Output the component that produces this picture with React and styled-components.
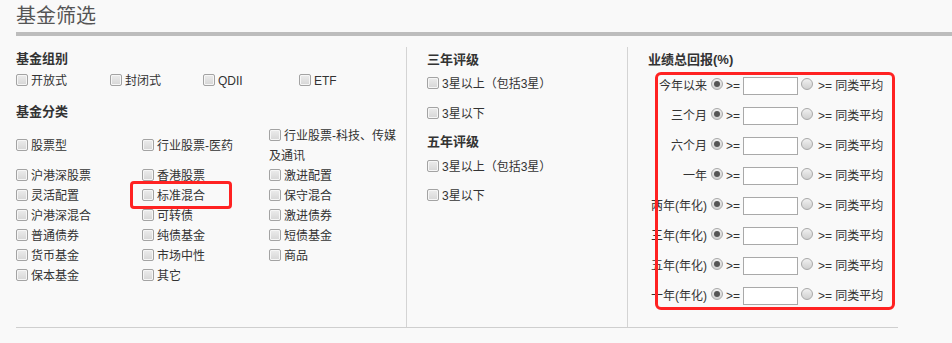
import React from "react"
import styled, { createGlobalStyle } from "styled-components"

const GlobalStyle = createGlobalStyle`
	body {
		margin: 0;
		background: #f9f9f9;
		font-family: "Liberation Sans", "Noto Sans CJK SC", sans-serif;
		font-size: 12px;
		color: #333;
	}
`

const Page = styled.div`
	padding-left: 16px;
`

const Title = styled.h2`
	margin: 3px 0 0;
	font-size: 20px;
	font-weight: normal;
	line-height: 27px;
	color: #555;
`

const TitleBar = styled.div`
	margin-top: 2px;
	height: 4px;
	background: #bdbdbd;
`

const Panel = styled.div`
	display: flex;
	width: 882px;
	height: 280px;
	margin-top: 11px;
	border-bottom: 1px solid #cfcfcf;
`

const Column = styled.div`
	width: ${props => props.width}px;
	box-sizing: border-box;
	padding-left: ${props => (props.divider ? 20 : 0)}px;
	border-left: ${props => (props.divider ? "1px solid #d4d4d4" : "none")};
`

const Heading = styled.h4`
	margin: ${props => props.top || 0}px 0 0;
	font-size: 13px;
	font-weight: bold;
	line-height: 18px;
	color: #333;
`

const GroupRow = styled.div`
	display: grid;
	grid-template-columns: 94px 93px 96px auto;
	margin-top: 3px;
`

const ClassGrid = styled.div`
	display: grid;
	grid-template-columns: 126px 127px 131px;
	align-items: center;
	margin-top: 5px;
`

const CheckItem = styled.div`
	line-height: 20px;
	margin-top: ${props => props.top || 0}px;
`

const Box = styled.span`
	display: inline-block;
	box-sizing: border-box;
	width: 12px;
	height: 12px;
	margin-right: 3px;
	vertical-align: -1px;
	border: 1px solid #a3a3a3;
	border-radius: 2px;
	background: linear-gradient(#ececec, #d6d6d6);
	box-shadow: inset 0 0 0 1px #f6f6f6;
`

const PerfList = styled.div`
	position: relative;
	margin-top: 2px;
`

const PerfRow = styled.div`
	display: flex;
	align-items: center;
	height: 30px;
`

const PerfLabel = styled.span`
	width: 59px;
	text-align: right;
	line-height: 20px;
`

const Radio = styled.span`
	position: relative;
	box-sizing: border-box;
	width: 12px;
	height: 12px;
	margin: -5px 0 0 ${props => props.gap}px;
	border: 1px solid #a8a8a8;
	border-radius: 50%;
	background: linear-gradient(#f0f0f0, #cfcfcf);
	&::after {
		content: "";
		display: ${props => (props.checked ? "block" : "none")};
		position: absolute;
		left: 2px;
		top: 2px;
		width: 6px;
		height: 6px;
		border-radius: 50%;
		background: #555;
	}
`

const Op = styled.span`
	margin-left: ${props => props.gap}px;
	line-height: 20px;
`

const NumInput = styled.input`
	box-sizing: border-box;
	width: 55px;
	height: 18px;
	margin: 0 0 0 3px;
	padding: 0 2px;
	border: 1px solid #a9a9a9;
	background: #fff;
	font-size: 12px;
	outline: none;
`

const Highlight = styled.div`
	position: absolute;
	left: ${props => props.left}px;
	top: ${props => props.top}px;
	width: ${props => props.width}px;
	height: ${props => props.height}px;
	box-sizing: border-box;
	border: 3px solid #ff2222;
	border-radius: ${props => props.radius}px;
	pointer-events: none;
`

const Cell = styled.div`
	position: relative;
`

const groups = ["开放式", "封闭式", "QDII", "ETF"]

const classes = [
	"股票型", "行业股票-医药", "行业股票-科技、传媒及通讯",
	"沪港深股票", "香港股票", "激进配置",
	"灵活配置", "标准混合", "保守混合",
	"沪港深混合", "可转债", "激进债券",
	"普通债券", "纯债基金", "短债基金",
	"货币基金", "市场中性", "商品",
	"保本基金", "其它", null
]

const periods = ["今年以来", "三个月", "六个月", "一年", "两年(年化)", "三年(年化)", "五年(年化)", "十年(年化)"]

const Check = ({ label, top }) => (
	<CheckItem top={top}>
		<Box />
		{label}
	</CheckItem>
)

export default function App() {
	return (
		<Page>
			<GlobalStyle />
			<Title>基金筛选</Title>
			<TitleBar />
			<Panel>
				<Column width={390}>
					<Heading top={3}>基金组别</Heading>
					<GroupRow>
						{groups.map(g => <Check key={g} label={g} />)}
					</GroupRow>
					<Heading top={12}>基金分类</Heading>
					<ClassGrid>
						{classes.map((c, i) =>
							c === null ? <div key={i} /> : (
								<Cell key={c}>
									<Check label={c} />
									{c === "标准混合" && (
										<Highlight left={-12} top={-5} width={102} height={28} radius={4} />
									)}
								</Cell>
							)
						)}
					</ClassGrid>
				</Column>
				<Column width={221} divider>
					<Heading top={4}>三年评级</Heading>
					<Check top={5} label="3星以上（包括3星）" />
					<Check top={10} label="3星以下" />
					<Heading top={9}>五年评级</Heading>
					<Check top={6} label="3星以上（包括3星）" />
					<Check top={9} label="3星以下" />
				</Column>
				<Column width={271} divider>
					<Heading top={4}>业绩总回报(%)</Heading>
					<PerfList>
						{periods.map(p => (
							<PerfRow key={p}>
								<PerfLabel>{p}</PerfLabel>
								<Radio gap={4} checked />
								<Op gap={3}>&gt;=</Op>
								<NumInput />
								<Radio gap={3} />
								<Op gap={5}>&gt;= 同类平均</Op>
							</PerfRow>
						))}
						<Highlight left={7} top={1} width={240} height={238} radius={6} />
					</PerfList>
				</Column>
			</Panel>
		</Page>
	)
}
